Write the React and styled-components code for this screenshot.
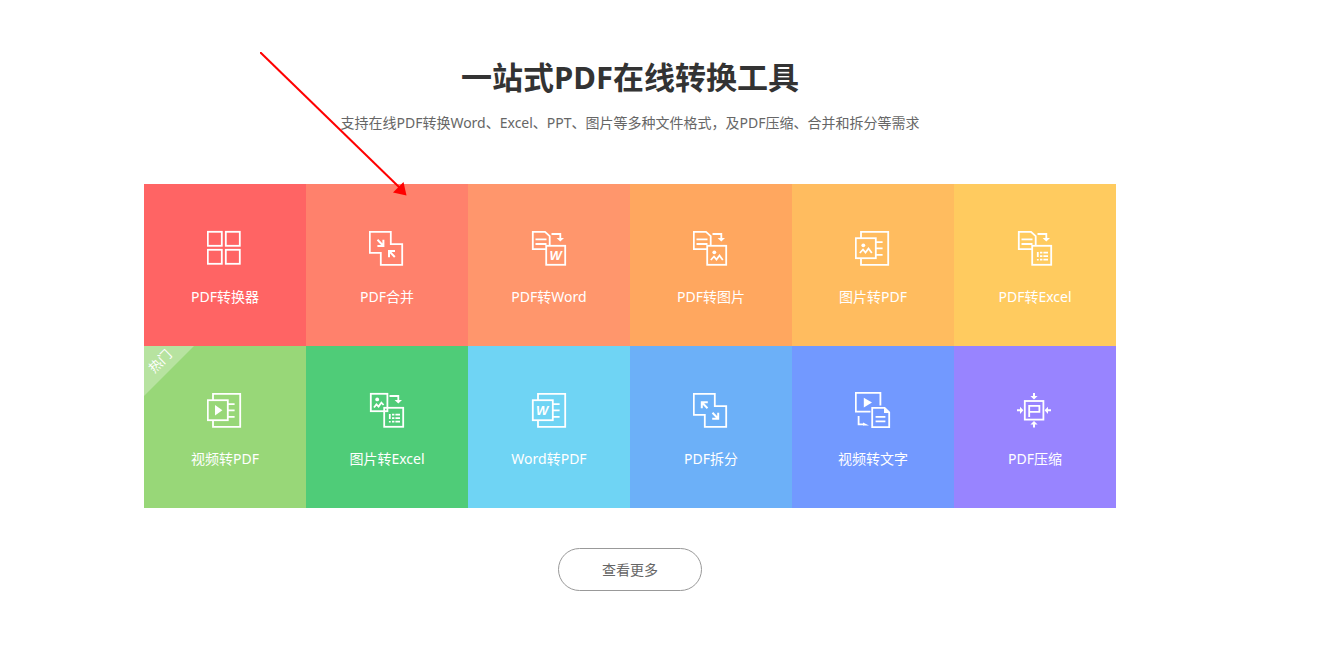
import styled, { createGlobalStyle } from 'styled-components';

const GlobalStyle = createGlobalStyle`
  * {
    box-sizing: border-box;
  }
  body {
    margin: 0;
    background: #fff;
    font-family: 'Noto Sans', 'Noto Sans CJK SC', sans-serif;
  }
`;

const Letter = styled.text`
  fill: #fff;
  stroke: none;
  font: italic bold 13px 'Liberation Sans', sans-serif;
`;

const FileShape = () => (
  <>
    <path d="M14 19.2H.8V1.8H13L17.7 6.2V15" />
    <path d="M3.5 9.3H14.5M3.5 14H14.5" />
  </>
);

const TurnArrow = () => (
  <>
    <path d="M19.5 4H28.3V9" />
    <path d="M24.6 8H32L28.3 11.6Z" fill="#fff" stroke="none" />
  </>
);

const Target = () => <rect x="14.2" y="15.8" width="19" height="19" />;

const Picture = () => (
  <>
    <circle cx="21.3" cy="22.3" r="1.9" fill="#fff" stroke="none" />
    <path d="M17.8 30L21 26.5L23.5 29.5L26.5 25.5L29.8 30" />
  </>
);

const Sheet = () => (
  <path d="M19.8 22V27M19.8 29V30.5M22 22.7H24.4M25.4 22.7H30M22 26.2H24.4M25.4 26.2H30M22 29.7H24.4M25.4 29.7H30" />
);

const Page = () => (
  <>
    <rect x=".8" y="8.2" width="20" height="20" />
    <path d="M6 8V1.8H33.2V34.8H6V28.5M21 12.2H27.6M21 18.4H27.6M21 24.8H27.6" />
  </>
);

const Blocks = () => <path d="M.8 1.8H21.8V14.2H33.2V34.8H11.8V22.8H.8Z" />;

const icons = {
  converter: (
    <>
      <rect x=".8" y="1.8" width="14" height="14" />
      <rect x="18.8" y="1.8" width="14" height="14" />
      <rect x=".8" y="19.8" width="14" height="14" />
      <rect x="18.8" y="19.8" width="14" height="14" />
    </>
  ),
  merge: (
    <>
      <Blocks />
      <path
        d="M8.5 9.8L14 15.5M14.4 9.8V16H8.4M25.8 27L20.3 21.3M26 21H20V27.2"
        strokeWidth="2"
      />
    </>
  ),
  split: (
    <>
      <Blocks />
      <path
        d="M14.5 16.2L9 10.5M14.8 10.2H8.8V16.2M19.5 20.8L25 26.5M25.2 20.8V26.8H19.2"
        strokeWidth="2"
      />
    </>
  ),
  toWord: (
    <g transform="translate(1 0)">
      <FileShape />
      <TurnArrow />
      <Target />
      <Letter x="17.5" y="30">
        W
      </Letter>
    </g>
  ),
  toPicture: (
    <>
      <FileShape />
      <TurnArrow />
      <Target />
      <Picture />
    </>
  ),
  toExcel: (
    <g transform="translate(1 0)">
      <FileShape />
      <TurnArrow />
      <Target />
      <Sheet />
    </g>
  ),
  pictureTo: (
    <>
      <Page />
      <g transform="translate(-13 -7)">
        <Picture />
      </g>
    </>
  ),
  videoTo: (
    <>
      <Page />
      <path d="M8 13V23.4L15.4 18.2Z" fill="#fff" stroke="none" />
    </>
  ),
  pictureToExcel: (
    <g transform="translate(1 0)">
      <rect x=".8" y="1.8" width="16.6" height="17.4" />
      <circle cx="7.2" cy="7.4" r="1.9" fill="#fff" stroke="none" />
      <path d="M4 15.5L6.4 12.4L8.6 14.6L11.4 10.6L13.6 13" />
      <TurnArrow />
      <Target />
      <Sheet />
    </g>
  ),
  wordTo: (
    <g transform="translate(1 0)">
      <Page />
      <Letter x="4" y="23">
        W
      </Letter>
    </g>
  ),
  videoToText: (
    <>
      <path d="M15.5 19.7H.8V.8H25.4V13.6" />
      <path d="M8.8 5.8V15.4L17 10.6Z" fill="#fff" stroke="none" />
      <path d="M17.2 15.8H29.6L34.2 20.4V35.2H17.2ZM20.6 24.8H30.4M20.6 29.4H30.4" />
      <path d="M29 15.8V21H34.4Z" fill="#fff" stroke="none" />
      <path d="M3.6 24V32.4H9" />
      <path d="M8 30.4L14 33.4H8Z" fill="#fff" stroke="none" />
    </>
  ),
  compress: (
    <>
      <rect x="7.8" y="9" width="18.6" height="18.6" />
      <path d="M12.2 25V13.8H22.4V19.8H12.2" />
      <path d="M17 1V5M17 35.5V31.5M0 18.3H4M34 18.3H30" strokeWidth="2" />
      <path
        d="M13.4 4H20.6L17 7.6ZM13.4 32.6H20.6L17 29ZM3 14.7V21.9L6.4 18.3ZM31 14.7V21.9L27.6 18.3Z"
        fill="#fff"
        stroke="none"
      />
    </>
  ),
};

const tools = [
  { title: 'PDF转换器', icon: 'converter', color: '#ff6464' },
  { title: 'PDF合并', icon: 'merge', color: '#ff816c' },
  { title: 'PDF转Word', icon: 'toWord', color: '#ff966c' },
  { title: 'PDF转图片', icon: 'toPicture', color: '#ffa75f' },
  { title: '图片转PDF', icon: 'pictureTo', color: '#ffbc5f' },
  { title: 'PDF转Excel', icon: 'toExcel', color: '#ffcb5f' },
  { title: '视频转PDF', icon: 'videoTo', color: '#98d778', hot: true },
  { title: '图片转Excel', icon: 'pictureToExcel', color: '#4fcc78' },
  { title: 'Word转PDF', icon: 'wordTo', color: '#6fd4f4' },
  { title: 'PDF拆分', icon: 'split', color: '#6cb0f8' },
  { title: '视频转文字', icon: 'videoToText', color: '#7299ff' },
  { title: 'PDF压缩', icon: 'compress', color: '#9884ff' },
];

const App = () => (
  <>
    <GlobalStyle />
    <Section>
      <Title>一站式PDF在线转换工具</Title>
      <Text>
        支持在线PDF转换Word、Excel、PPT、图片等多种文件格式，及PDF压缩、合并和拆分等需求
      </Text>
      <Grid>
        {tools.map(({ title, icon, color, hot }) => (
          <Card key={title} href="#" $color={color}>
            {hot && (
              <Ribbon>
                <RibbonText>热门</RibbonText>
              </Ribbon>
            )}
            <Icon viewBox="0 0 36 36" aria-hidden="true">
              {icons[icon]}
            </Icon>
            <CardTitle>{title}</CardTitle>
          </Card>
        ))}
      </Grid>
      <MoreButton type="button">查看更多</MoreButton>
      <Pointer viewBox="0 0 148 145" aria-hidden="true">
        <path d="M0 0L140 136" stroke="#f00" strokeWidth="2" />
        <path d="M143.5 130L133 140.5L146.5 143.5Z" fill="#f00" />
      </Pointer>
    </Section>
  </>
);

export default App;

const Section = styled.main`
  position: relative;
  display: flex;
  flex-direction: column;
  align-items: center;
  max-width: 1260px;
  padding: 56px 24px;
`;

const Title = styled.h1`
  margin: 0;
  color: #333;
  font-size: 31px;
  line-height: 42px;
`;

const Text = styled.p`
  margin: 14px 0 50px;
  color: #666;
  font-size: 14px;
  line-height: 22px;
`;

const Grid = styled.div`
  display: grid;
  grid-template-columns: repeat(6, 1fr);
  width: 100%;
  max-width: 972px;
`;

const Card = styled.a`
  position: relative;
  display: flex;
  flex-direction: column;
  align-items: center;
  aspect-ratio: 1;
  padding-top: 46px;
  overflow: hidden;
  background: ${({ $color }) => $color};
  color: #fff;
  text-decoration: none;
`;

const Icon = styled.svg`
  width: 36px;
  height: 36px;
  fill: none;
  stroke: #fff;
  stroke-width: 1.8;
`;

const CardTitle = styled.span`
  margin-top: 20px;
  font-size: 14px;
  line-height: 22px;
`;

const Ribbon = styled.span`
  position: absolute;
  top: 0;
  left: 0;
  width: 50px;
  height: 50px;
  background: rgba(255, 255, 255, 0.3);
  clip-path: polygon(0 0, 100% 0, 0 100%);
`;

const RibbonText = styled.span`
  display: block;
  width: 32px;
  font-size: 13px;
  line-height: 30px;
  text-align: center;
  transform: rotate(-45deg);
`;

const MoreButton = styled.button`
  margin-top: 40px;
  padding: 0 43px;
  border: 1px solid #999;
  border-radius: 22px;
  background: #fff;
  color: #666;
  font-family: inherit;
  font-size: 14px;
  line-height: 41px;
  cursor: pointer;
`;

const Pointer = styled.svg`
  position: absolute;
  top: 52px;
  left: 260px;
  width: 148px;
  height: 145px;
  fill: none;
  pointer-events: none;
`;
